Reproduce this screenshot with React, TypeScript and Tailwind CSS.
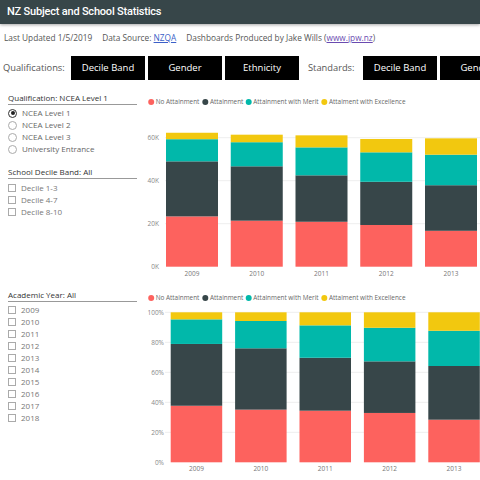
import React from "react";

const COLORS = ["#FD625E", "#374649", "#01B8AA", "#F2C80F"];
const YEARS = ["2009", "2010", "2011", "2012", "2013"];
const LEGEND = [
  { label: "No Attainment", dot: 11.2, text: 15.7 },
  { label: "Attainment", dot: 65.3, text: 70 },
  { label: "Attainment with Merit", dot: 108.7, text: 113.3 },
  { label: "Attaiment with Excellence", dot: 184.3, text: 189 },
];

// cumulative tops of each segment per year
const COUNTS = [
  [23.4, 49.0, 59.3, 62.3],
  [21.4, 46.7, 57.9, 61.4],
  [20.9, 42.5, 55.5, 61.1],
  [19.4, 39.5, 53.2, 59.4],
  [16.7, 37.9, 52.1, 59.7],
];
const PERCENTS = [
  [37.7, 78.9, 95.3, 100],
  [35.1, 76.0, 94.2, 100],
  [34.4, 69.7, 91.3, 100],
  [32.9, 67.3, 89.7, 100],
  [28.4, 64.2, 87.7, 100],
];

type ChartProps = {
  h: number;
  legendY: number;
  labelRight: number;
  gridLeft: number;
  ticks: { label: string; value: number }[];
  zeroY: number;
  scale: number;
  firstBar: number;
  pitch: number;
  barW: number;
  xLabelY: number;
  data: number[][];
};

function StackedChart(p: ChartProps) {
  return (
    <svg width={340} height={p.h} className="block shrink-0">
      {/* Legend */}
      {LEGEND.map((l, i) => (
        <g key={l.label}>
          <circle cx={l.dot} cy={p.legendY} r={3} fill={COLORS[i]} />
          <text x={l.text} y={p.legendY + 2.3} fontSize={6.4} fill="#666">
            {l.label}
          </text>
        </g>
      ))}

      {/* Grid + y axis */}
      {p.ticks.map((t) => {
        const y = p.zeroY - t.value * p.scale;
        return (
          <g key={t.label}>
            {t.value > 0 && (
              <line x1={p.gridLeft} x2={340} y1={y} y2={y} stroke="#eeeeee" strokeWidth={1} />
            )}
            <text x={p.labelRight} y={y + 2.3} fontSize={6.5} fill="#888" textAnchor="end">
              {t.label}
            </text>
          </g>
        );
      })}

      {/* Bars */}
      {p.data.map((tops, i) => {
        const x = p.firstBar + i * p.pitch;
        return (
          <g key={YEARS[i]}>
            {tops.map((top, j) => {
              const prev = j === 0 ? 0 : tops[j - 1];
              return (
                <rect
                  key={j}
                  x={x}
                  y={p.zeroY - top * p.scale}
                  width={p.barW}
                  height={(top - prev) * p.scale}
                  fill={COLORS[j]}
                />
              );
            })}
            <text x={x + p.barW / 2} y={p.xLabelY + 2.3} fontSize={6.5} fill="#777" textAnchor="middle">
              {YEARS[i]}
            </text>
          </g>
        );
      })}
    </svg>
  );
}

function Heading({ children }: { children: React.ReactNode }) {
  return (
    <div className="pt-[2px] leading-[12px] border-b border-[#999] text-[8px] text-[#333]">
      {children}
    </div>
  );
}

function Radio({ label, checked }: { label: string; checked?: boolean }) {
  return (
    <div className="h-3 flex items-center gap-[5px] text-[8px] text-[#666]">
      <span
        className={`w-[9px] h-[9px] rounded-full flex items-center justify-center ${
          checked ? "border-[1.5px] border-[#333]" : "border border-[#aaa]"
        }`}
      >
        {checked && <span className="w-[4px] h-[4px] rounded-full bg-[#222]" />}
      </span>
      {label}
    </div>
  );
}

function Check({ label }: { label: string }) {
  return (
    <div className="h-3 flex items-center gap-[5px] text-[8px] text-[#777]">
      <span className="w-[8px] h-[8px] border border-[#aaa] bg-white" />
      {label}
    </div>
  );
}

function TabButton({ label }: { label: string }) {
  return (
    <button className="w-[74px] shrink-0 bg-black text-white text-[9.5px] flex items-center justify-center">
      {label}
    </button>
  );
}

export default function App() {
  return (
    <div className="w-[480px] h-[480px] overflow-hidden bg-white font-['Open_Sans',sans-serif]">
      {/* Title bar */}
      <div className="relative z-10 h-6 bg-[#374649] flex items-center pl-[7px] shadow-[0_1px_3px_rgba(0,0,0,0.35)]">
        <h1 className="font-['Roboto',sans-serif] font-medium text-[11px] tracking-[-0.2px] text-white">
          NZ Subject and School Statistics
        </h1>
      </div>

      {/* Info line */}
      <div className="h-7 flex items-center pl-1 text-[8.3px] text-[#555] whitespace-nowrap">
        <span>Last Updated 1/5/2019</span>
        <span className="ml-[10px]">
          Data Source: <a className="underline text-[#3b5fc8]">NZQA</a>
        </span>
        <span className="ml-[10px]">
          Dashboards Produced by Jake Wills (<a className="underline text-[#6a4bb0]">www.jpw.nz</a>)
        </span>
      </div>

      {/* Tabs */}
      <div className="mt-1 h-6 flex items-stretch gap-[3px] pl-[3px]">
        <span className="w-[65px] shrink-0 flex items-center text-[9.3px] text-[#555]">Qualifications:</span>
        <TabButton label="Decile Band" />
        <TabButton label="Gender" />
        <TabButton label="Ethnicity" />
        <span className="w-[58px] shrink-0 flex items-center pl-[6px] text-[9.3px] text-[#555]">Standards:</span>
        <TabButton label="Decile Band" />
        <TabButton label="Gender" />
      </div>

      {/* Counts row */}
      <div className="mt-[10px] flex h-[190px]">
        <div className="w-[140px] shrink-0 pl-2 pr-[3px]">
          <Heading>Qualification: NCEA Level 1</Heading>
          <div className="mt-[2px]">
            <Radio label="NCEA Level 1" checked />
            <Radio label="NCEA Level 2" />
            <Radio label="NCEA Level 3" />
            <Radio label="University Entrance" />
          </div>
          <div className="mt-[9px]">
            <Heading>School Decile Band: All</Heading>
          </div>
          <div className="mt-[3px]">
            <Check label="Decile 1-3" />
            <Check label="Decile 4-7" />
            <Check label="Decile 8-10" />
          </div>
        </div>
        <StackedChart
          h={190}
          legendY={12}
          labelRight={19}
          gridLeft={25}
          ticks={[
            { label: "0K", value: 0 },
            { label: "20K", value: 20 },
            { label: "40K", value: 40 },
            { label: "60K", value: 60 },
          ]}
          zeroY={176.7}
          scale={2.15}
          firstBar={26}
          pitch={64.75}
          barW={52}
          xLabelY={184}
          data={COUNTS}
        />
      </div>

      {/* Percent row */}
      <div className="flex h-[200px]">
        <div className="w-[140px] shrink-0 pl-2 pr-[3px] pt-[7px]">
          <Heading>Academic Year: All</Heading>
          <div className="mt-[2px]">
            {["2009", "2010", "2011", "2012", "2013", "2014", "2015", "2016", "2017", "2018"].map((y) => (
              <Check key={y} label={y} />
            ))}
          </div>
        </div>
        <StackedChart
          h={200}
          legendY={18}
          labelRight={24}
          gridLeft={25}
          ticks={[
            { label: "0%", value: 0 },
            { label: "20%", value: 20 },
            { label: "40%", value: 40 },
            { label: "60%", value: 60 },
            { label: "80%", value: 80 },
            { label: "100%", value: 100 },
          ]}
          zeroY={182.3}
          scale={1.5}
          firstBar={30.7}
          pitch={64.4}
          barW={51.5}
          xLabelY={189}
          data={PERCENTS}
        />
      </div>
    </div>
  );
}
